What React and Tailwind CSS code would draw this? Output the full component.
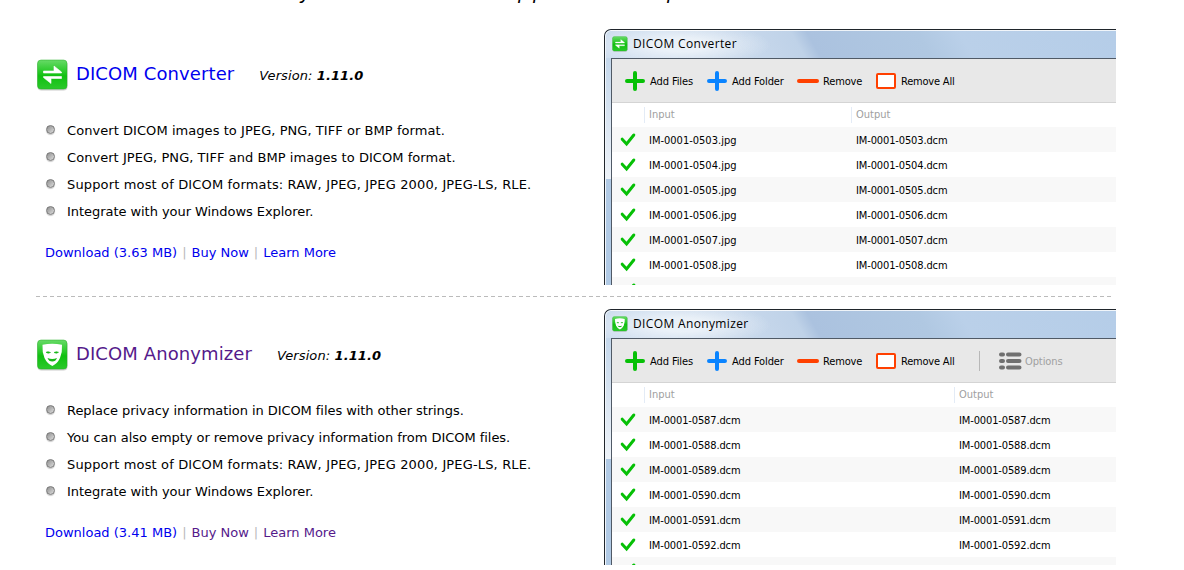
import React from 'react';

function AppIcon({ kind, className }) {
  return (
    <svg className={className} viewBox="0 0 31 32">
      <defs>
        <linearGradient id={`g-${kind}`} x1="0" y1="0" x2="0" y2="1">
          <stop offset="0" stopColor="#67da67" />
          <stop offset=".4" stopColor="#28c928" />
          <stop offset=".55" stopColor="#10c010" />
          <stop offset="1" stopColor="#2cc92c" />
        </linearGradient>
      </defs>
      <rect x="0.5" y="2" width="30" height="29.5" rx="4" fill="#aaa" opacity=".6" />
      <rect x="0.5" y="1" width="29.5" height="29" rx="3.5" fill={`url(#g-${kind})`} stroke="#25ad25" strokeWidth=".5" />
      {kind === 'converter' ? (
        <g fill="#fff" stroke="#fff" strokeWidth=".6" strokeLinejoin="round">
          <path d="M6.5 12H17V7L24.5 13V14H6.5z" />
          <path d="M24.5 17.5H6.5V18.5L14 24.5V19.5H24.5z" />
        </g>
      ) : (
        <g>
          <path d="M5.5 5.8Q15 3.5 25 5.8Q25.5 13 23 19Q20.5 24.5 15.3 27Q10 24.5 7.5 19Q5 13 5.5 5.8z" fill="#fff" />
          <path d="M9 13.3Q11 12 13.5 13.5Q11 15 9 13.3zM17 13.5Q19.5 12 21.5 13.3Q19.5 15 17 13.5z" fill="#18b818" stroke="#18b818" strokeWidth=".6" />
          <path d="M10.5 19Q15.3 21.2 20 19Q18.7 22.5 15.3 22.5Q11.8 22.5 10.5 19z" fill="#18b818" />
        </g>
      )}
    </svg>
  );
}

function Bullet() {
  return (
    <span className="h-[9px] w-[9px] shrink-0 rounded-full border border-[#777] bg-[linear-gradient(135deg,#8e8e8e,#dedede)] shadow-[0_1px_1px_#ccc]" />
  );
}

function Plus({ className }) {
  return (
    <svg className={className} width="20" height="20" viewBox="0 0 20 20" stroke="currentColor" strokeWidth="4" strokeLinecap="round">
      <path d="M2 10H18M10 2V18" />
    </svg>
  );
}

function Check() {
  return (
    <svg className="ml-[8px] h-[16px] w-[17px] shrink-0" viewBox="0 0 17 16" fill="none" stroke="#06c006" strokeWidth="3">
      <path d="M2.2 7.2L6.6 12L13.8 3" strokeLinecap="round" />
    </svg>
  );
}

function Toolbar({ options }) {
  return (
    <div className="flex h-[44px] items-center border-b border-[#d4d4d4] bg-[#e8e8e8] pl-[13px] text-[11px] text-black">
      <Plus className="text-[#06c006]" />
      <span className="ml-[5px] w-[57px] pt-[3px] tracking-[-0.1px]">Add Files</span>
      <Plus className="text-[#0a84ff]" />
      <span className="ml-[5px] w-[65px] pt-[3px] tracking-[-0.1px]">Add Folder</span>
      <span className="h-[4px] w-[22px] rounded-full bg-[#ff4000]" />
      <span className="ml-[4px] w-[53px] pt-[3px] tracking-[-0.15px]">Remove</span>
      <span className="h-[16px] w-[20px] rounded-[2px] border-2 border-[#ff4000] bg-white" />
      <span className="ml-[5px] w-[78px] pt-[3px] tracking-[-0.2px]">Remove All</span>
      {options && (
        <>
          <span className="h-[20px] w-px bg-[#b8b8b8]" />
          <svg className="ml-[19px]" width="23" height="18" viewBox="0 0 23 18" stroke="#707070" strokeWidth="4" strokeLinecap="round">
            <path d="M2 2.5H4M9 2.5H20.5M2 9H4M9 9H20.5M2 15.5H4M9 15.5H20.5" />
          </svg>
          <span className="ml-[3px] pt-[3px] tracking-[-0.1px] text-[#a0a0a0]">Options</span>
        </>
      )}
    </div>
  );
}

function AppWindow({ kind, title, first, ext, options, inputWidth }) {
  const rows = Array.from({ length: 6 }, (_, i) => `IM-0001-0${first + i}`);
  return (
    <div className="mt-[12px] flex h-[256px] w-[512px] shrink-0 flex-col overflow-hidden rounded-tl-[7px] border-t border-l border-[#20262c] bg-[#b9cfe8] font-['DejaVu_Sans_Condensed','DejaVu_Sans',sans-serif]">
      <div className="flex h-[28px] shrink-0 items-center rounded-tl-[6px] border-t border-l border-white/80 bg-[radial-gradient(ellipse_90px_22px_at_75px_14px,rgba(240,245,250,0.85)_30%,transparent_100%),linear-gradient(60deg,#cfdeef_0%,#c6d7eb_30%,#bfd2e8_38%,#abc2df_41%,#b0c8e2_62%,#bad0e9_70%,#b5cde8_100%)] pb-[1px] pl-[6px]">
        <AppIcon kind={kind} className="h-[16px] w-[16px]" />
        <span className="ml-[5px] font-['Open_Sans',sans-serif] text-[12px] tracking-[0.36px] text-black">{title}</span>
      </div>
      <div className="flex min-h-0 flex-1">
        <div className="flex w-[6px] shrink-0 flex-col border-l border-white/80">
          <div className="h-[121px] bg-[linear-gradient(#c4d7eb,#edf2f8)]" />
          <div className="flex-1 bg-[#b0c9e4]" />
        </div>
        <div className="min-w-0 flex-1 border-t border-l border-[#505a66] bg-white">
          <Toolbar options={options} />
          <div className="flex h-[24px] items-center pl-[32px] text-[11px] text-[#a0a0a0]">
            <span className={`${inputWidth} border-l border-[#e3ebf6] pl-[4px]`}>Input</span>
            <span className="border-l border-[#e3ebf6] pl-[4px]">Output</span>
          </div>
          {rows.map((r, i) => (
            <div key={r} className={`flex h-[25px] items-center text-[11px] text-black ${i % 2 ? 'bg-white' : 'bg-[#f8f8f8]'}`}>
              <Check />
              <span className={`ml-[12px] ${inputWidth} pt-[3px] ${ext === 'jpg' ? 'tracking-[0px]' : 'tracking-[-0.13px]'}`}>{r}.{ext}</span>
              <span className="pt-[3px] tracking-[-0.13px]">{r}.dcm</span>
            </div>
          ))}
          <div className="flex h-[25px] items-center bg-[#f8f8f8]"><Check /></div>
        </div>
      </div>
    </div>
  );
}

function Product({ kind, title, titleColor, linkColor, size, items, last, ...win }) {
  return (
    <article className="flex h-[280px] w-[1076px] flex-col">
      <div className="flex h-[279px]">
        <div className="w-[568px] shrink-0 pt-[42px]">
          <div className="flex h-[32px] items-center">
            <AppIcon kind={kind} className="ml-[1px] h-[32px] w-[31px]" />
            <h2 className={`ml-[8px] -mt-[4px] text-[18px] tracking-[0.1px] ${titleColor}`}>{title}</h2>
            <p className="ml-[25px] pt-[2px] text-[13px] italic tracking-[0.1px]">Version: <b>1.11.0</b></p>
          </div>
          <ul className="mt-[26px] text-[13px]">
            {items.map(([t, tracking]) => (
              <li key={t} className="flex h-[27px] pl-[10px] leading-[27px]">
                <span className="flex h-[25px] items-center"><Bullet /></span>
                <span className={`ml-[12px] whitespace-nowrap ${tracking}`}>{t}</span>
              </li>
            ))}
          </ul>
          <nav className={`mt-[18px] flex pl-[9px] text-[13px] leading-[20px] ${linkColor}`}>
            <a className="text-[#0000ee]">Download ({size} MB)</a>
            <span className="mx-[5px] text-[#bbb]">|</span>
            <a>Buy Now</a>
            <span className="mx-[5px] text-[#bbb]">|</span>
            <a>Learn More</a>
          </nav>
        </div>
        <AppWindow kind={kind} title={title} {...win} />
      </div>
      {!last && <div className="h-px bg-[repeating-linear-gradient(90deg,#bbb_0_4px,transparent_4px_7px)]" />}
    </article>
  );
}

export default function App() {
  return (
    <main className="h-[570px] w-[1184px] overflow-hidden bg-white pl-[36px] font-['DejaVu_Sans',sans-serif] text-black">
      <header className="flex h-[17px] items-start overflow-hidden pl-[264px] text-[19px] italic leading-[17px]">
        <span className="-mt-[16px] w-[218px]">y</span>
        <span className="-mt-[16px] w-[149px] tracking-[3px]">pp</span>
        <span className="-mt-[16px]">p</span>
      </header>
      <Product
        kind="converter" title="DICOM Converter" titleColor="text-[#0000ee]" linkColor="text-[#0000ee]" size="3.63"
        first={503} ext="jpg" inputWidth="w-[207px]"
        items={[
          ['Convert DICOM images to JPEG, PNG, TIFF or BMP format.', 'tracking-[0.06px]'],
          ['Convert JPEG, PNG, TIFF and BMP images to DICOM format.', 'tracking-[0.05px]'],
          ['Support most of DICOM formats: RAW, JPEG, JPEG 2000, JPEG-LS, RLE.', 'tracking-[0.15px]'],
          ['Integrate with your Windows Explorer.', 'tracking-[-0.05px]'],
        ]}
      />
      <Product
        kind="anonymizer" title="DICOM Anonymizer" titleColor="text-[#551a8b]" linkColor="text-[#551a8b]" size="3.41" last
        first={587} ext="dcm" inputWidth="w-[310px]" options
        items={[
          ['Replace privacy information in DICOM files with other strings.', 'tracking-[-0.06px]'],
          ['You can also empty or remove privacy information from DICOM files.', 'tracking-[-0.04px]'],
          ['Support most of DICOM formats: RAW, JPEG, JPEG 2000, JPEG-LS, RLE.', 'tracking-[0.15px]'],
          ['Integrate with your Windows Explorer.', 'tracking-[-0.05px]'],
        ]}
      />
    </main>
  );
}
